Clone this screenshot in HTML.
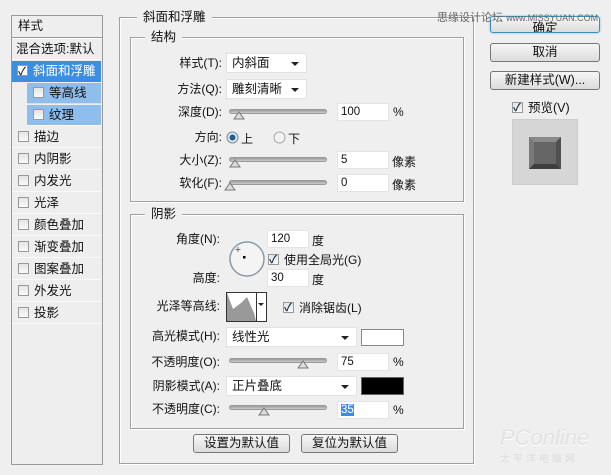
<!DOCTYPE html>
<html><head><meta charset="utf-8"><style>
*{box-sizing:border-box;margin:0;padding:0}
body{width:611px;height:475px;background:#efefef;font-family:"Liberation Sans","Noto Sans CJK SC",sans-serif;font-size:12px;color:#111;position:relative;overflow:hidden}
.a{position:absolute}
.lbl{position:absolute;text-align:right;white-space:nowrap;line-height:14px}
.box{position:absolute;border:1px solid #a0a0a0;box-shadow:1px 1px 0 #fff inset,1px 1px 0 #fff}
.leg{position:absolute;background:#efefef;padding:0 6px;line-height:14px;font-size:12.5px}
.it{position:absolute;left:12px;width:89px;height:21px;line-height:21px;border-bottom:1px solid #fafafa;font-size:12.5px;padding-left:6px}
.cb{display:inline-block;width:11px;height:11px;border:1px solid #999;background:linear-gradient(#e4e4e4,#fafafa);vertical-align:-1px;margin-right:5px;position:relative}
.cb.on::after{content:"✓";position:absolute;left:0px;top:-4px;font-size:11px;color:#234;font-weight:bold}
.dd{position:absolute;background:#fff;border:1px solid #e2e2e2;line-height:18px;padding-left:5px;font-size:12.5px}
.dd::after{content:"";position:absolute;right:7px;top:8px;border:4px solid transparent;border-top:4px solid #222;border-bottom:0}
.sl{position:absolute;height:5px;border-radius:3px;background:linear-gradient(#999,#ccc);border:1px solid #999}
.th{position:absolute;width:10px;height:8px;top:1px}
.inp{position:absolute;background:#fff;border:1px solid #e4e4e4;line-height:16px;padding-left:3px;font-size:11.5px}
.btn{position:absolute;border:1px solid #777;border-radius:3px;background:linear-gradient(#f6f6f6,#dcdcdc);text-align:center;line-height:17px;font-size:12.5px}
</style></head><body>
<!-- left panel -->
<div class="a" style="left:11px;top:15px;width:92px;height:450px;border:1px solid #999;background:#eeeeee"></div>
<div class="a" style="left:12px;top:16px;width:90px;height:22px;border-bottom:1px solid #999;box-shadow:0 1px 0 #fff;line-height:20px;padding-left:6px;font-size:12.5px">样式</div>
<div class="it" style="top:39px;padding-left:4px">混合选项:默认</div>
<div class="it" style="top:61px;background:#3b8ee2;color:#fff;padding-left:5px;border-color:#3b8ee2"><span class="cb on" style="background:#fff"></span>斜面和浮雕</div>
<div class="it" style="top:83px;left:27px;width:74px;background:#8fbdec;padding-left:6px;border-color:#cfe2f7"><span class="cb"></span>等高线</div>
<div class="it" style="top:105px;left:27px;width:74px;background:#8fbdec;padding-left:6px"><span class="cb"></span>纹理</div>
<div class="it" style="top:127px"><span class="cb"></span>描边</div>
<div class="it" style="top:149px"><span class="cb"></span>内阴影</div>
<div class="it" style="top:171px"><span class="cb"></span>内发光</div>
<div class="it" style="top:193px"><span class="cb"></span>光泽</div>
<div class="it" style="top:215px"><span class="cb"></span>颜色叠加</div>
<div class="it" style="top:237px"><span class="cb"></span>渐变叠加</div>
<div class="it" style="top:259px"><span class="cb"></span>图案叠加</div>
<div class="it" style="top:281px"><span class="cb"></span>外发光</div>
<div class="it" style="top:303px"><span class="cb"></span>投影</div>

<!-- main group -->
<div class="box" style="left:119px;top:17px;width:355px;height:447px"></div>
<div class="leg" style="left:137px;top:10px">斜面和浮雕</div>
<div class="box" style="left:130px;top:37px;width:334px;height:165px"></div>
<div class="leg" style="left:145px;top:30px">结构</div>

<div class="lbl" style="right:389px;top:56px">样式(T):</div>
<div class="dd" style="left:226px;top:53px;width:81px;height:20px">内斜面</div>
<div class="lbl" style="right:389px;top:82px">方法(Q):</div>
<div class="dd" style="left:226px;top:79px;width:81px;height:20px">雕刻清晰</div>
<div class="lbl" style="right:389px;top:105px">深度(D):</div>
<div class="sl" style="left:229px;top:109px;width:98px"></div>
<svg class="a" style="left:233px;top:111px" width="12" height="9"><path d="M1 8 L6 1 L11 8 Z" fill="#ddd" stroke="#777"/></svg>
<div class="inp" style="left:337px;top:103px;width:52px;height:18px">100</div>
<div class="a" style="left:393px;top:105px">%</div>
<div class="lbl" style="right:389px;top:130px">方向:</div>
<svg class="a" style="left:226px;top:131px" width="13" height="13"><circle cx="6.5" cy="6.5" r="5.5" fill="#dfe8f0" stroke="#7a8a99"/><circle cx="6.5" cy="6.5" r="3" fill="#1e5f93"/></svg>
<div class="a" style="left:241px;top:130px">上</div>
<svg class="a" style="left:273px;top:131px" width="13" height="13"><circle cx="6.5" cy="6.5" r="5.5" fill="#f3f3f3" stroke="#aaa"/></svg>
<div class="a" style="left:288px;top:130px">下</div>
<div class="lbl" style="right:389px;top:153px">大小(Z):</div>
<div class="sl" style="left:229px;top:157px;width:98px"></div>
<svg class="a" style="left:229px;top:159px" width="12" height="9"><path d="M1 8 L6 1 L11 8 Z" fill="#ddd" stroke="#777"/></svg>
<div class="inp" style="left:337px;top:151px;width:52px;height:18px">5</div>
<div class="a" style="left:392px;top:153px">像素</div>
<div class="lbl" style="right:389px;top:176px">软化(F):</div>
<div class="sl" style="left:229px;top:180px;width:98px"></div>
<svg class="a" style="left:224px;top:182px" width="12" height="9"><path d="M1 8 L6 1 L11 8 Z" fill="#ddd" stroke="#777"/></svg>
<div class="inp" style="left:337px;top:174px;width:52px;height:18px">0</div>
<div class="a" style="left:392px;top:176px">像素</div>

<div class="box" style="left:130px;top:214px;width:334px;height:215px"></div>
<div class="leg" style="left:145px;top:207px">阴影</div>
<div class="lbl" style="right:391px;top:232px">角度(N):</div>
<svg class="a" style="left:227px;top:239px" width="40" height="40"><circle cx="20" cy="20" r="17" fill="#f4f4f4" stroke="#8a99a8" stroke-width="1.5"/><rect x="16" y="17" width="2.5" height="2.5" fill="#000"/><path d="M11 8v5M8.5 10.5h5" stroke="#555" stroke-width="0.8"/></svg>
<div class="inp" style="left:267px;top:230px;width:42px;height:18px">120</div>
<div class="a" style="left:312px;top:232px">度</div>
<div class="a" style="left:268px;top:251px"><span class="cb on"></span>使用全局光(G)</div>
<div class="lbl" style="right:391px;top:271px">高度:</div>
<div class="inp" style="left:267px;top:269px;width:42px;height:18px">30</div>
<div class="a" style="left:312px;top:271px">度</div>
<div class="lbl" style="right:391px;top:299px">光泽等高线:</div>
<div class="a" style="left:226px;top:292px;width:41px;height:30px;border:1px solid #333;background:#fff"></div>
<svg class="a" style="left:227px;top:293px" width="30" height="28"><path d="M0 0 L6 16 L14 10 L20 4 L27 20 L29 28 L0 28Z" fill="#999"/></svg>
<div class="a" style="left:256px;top:292px;width:11px;height:30px;border-left:1px solid #333"></div>
<div class="a" style="left:258px;top:303px;border:3px solid transparent;border-top:3px solid #222"></div>
<div class="a" style="left:283px;top:299px"><span class="cb on"></span>消除锯齿(L)</div>
<div class="lbl" style="right:391px;top:329px">高光模式(H):</div>
<div class="dd" style="left:226px;top:327px;width:131px;height:20px">线性光</div>
<div class="a" style="left:361px;top:329px;width:43px;height:17px;background:#fff;border:1px solid #888"></div>
<div class="lbl" style="right:391px;top:355px">不透明度(O):</div>
<div class="sl" style="left:229px;top:358px;width:98px"></div>
<svg class="a" style="left:297px;top:360px" width="12" height="9"><path d="M1 8 L6 1 L11 8 Z" fill="#ddd" stroke="#777"/></svg>
<div class="inp" style="left:337px;top:353px;width:52px;height:18px">75</div>
<div class="a" style="left:393px;top:355px">%</div>
<div class="lbl" style="right:391px;top:379px">阴影模式(A):</div>
<div class="dd" style="left:226px;top:376px;width:131px;height:20px">正片叠底</div>
<div class="a" style="left:361px;top:377px;width:43px;height:18px;background:#000;border:1px solid #666"></div>
<div class="lbl" style="right:391px;top:402px">不透明度(C):</div>
<div class="sl" style="left:229px;top:405px;width:98px"></div>
<svg class="a" style="left:258px;top:407px" width="12" height="9"><path d="M1 8 L6 1 L11 8 Z" fill="#ddd" stroke="#777"/></svg>
<div class="inp" style="left:337px;top:401px;width:52px;height:18px"><span style="background:#3d8ee0;color:#fff">35</span></div>
<div class="a" style="left:393px;top:403px">%</div>
<div class="btn" style="left:193px;top:434px;width:97px;height:19px">设置为默认值</div>
<div class="btn" style="left:301px;top:434px;width:97px;height:19px">复位为默认值</div>

<!-- right -->
<div class="btn" style="left:490px;top:16px;width:110px;height:17px;border-color:#3c8fbf;box-shadow:0 0 2px #6bc4ee;line-height:22px;overflow:hidden">确定</div>
<div class="a" style="left:437px;top:9px;font-size:11px;color:#666;background:transparent;white-space:nowrap">思缘设计论坛 <span style="font-size:9px">www.MISSYUAN.COM</span></div>
<div class="btn" style="left:490px;top:43px;width:110px;height:19px">取消</div>
<div class="btn" style="left:490px;top:71px;width:110px;height:19px">新建样式(W)...</div>
<div class="a" style="left:512px;top:97px;font-size:12.5px"><span class="cb on"></span>预览(V)</div>
<div class="a" style="left:512px;top:119px;width:66px;height:66px;background:#d6d6d6;border:1px solid #ccc"></div>
<svg class="a" style="left:529px;top:137px" width="32" height="32"><rect width="32" height="32" fill="#666"/><path d="M0 0H32L27 5H5Z" fill="#8a8a8a"/><path d="M0 0L5 5V27L0 32Z" fill="#7a7a7a"/><path d="M0 32L5 27H27L32 32Z" fill="#3e3e3e"/><path d="M32 0L27 5V27L32 32Z" fill="#505050"/></svg>
<div class="a" style="left:500px;top:425px;font-size:22px;color:#e2e2e2;font-style:italic;text-shadow:0 1px 0 #fff">PConline</div>
<div class="a" style="left:500px;top:450px;font-size:10px;color:#dcdcdc;letter-spacing:3px">太平洋电脑网</div>
</body></html>
